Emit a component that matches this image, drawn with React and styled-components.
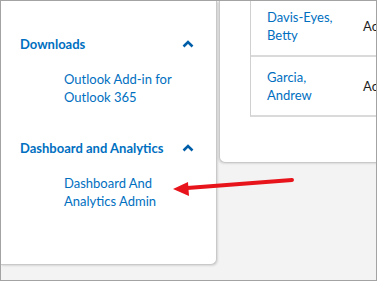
import React from "react";
import styled, { createGlobalStyle } from "styled-components";

const Global = createGlobalStyle`
  html, body { margin: 0; padding: 0; background: #fff; }
  body { font-family: Lato, "Open Sans", sans-serif; }
`;

const Frame = styled.div`
  position: relative;
  width: 377px;
  height: 281px;
  box-sizing: border-box;
  border: 1px solid #a3a3a3;
  background: #f3f3f3;
  display: flex;
  align-items: flex-start;
  overflow: hidden;
`;

const SidePanel = styled.aside`
  flex: 0 0 auto;
  box-sizing: border-box;
  width: 216px;
  height: 264px;
  background: #fff;
  border-right: 1px solid #c9c9c9;
  border-bottom: 1px solid #c9c9c9;
  border-bottom-right-radius: 6px;
  box-shadow: 1px 1px 2px rgba(0, 0, 0, 0.12);
  padding: 33px 0 0 19px;
  display: flex;
  flex-direction: column;
  gap: 32px;
`;

const Section = styled.section`
  display: flex;
  flex-direction: column;
  gap: 16px;
`;

const SectionHeader = styled.div`
  display: flex;
  align-items: center;
  justify-content: space-between;
  width: 175px;
  height: 20px;
  color: #006fbf;
  font-size: 13px;
  font-weight: 700;
`;

const Chevron = styled.svg`
  width: 12px;
  height: 8px;
  margin-right: 1px;
`;

const ItemLink = styled.a`
  display: block;
  margin-left: 44px;
  width: 118px;
  color: #006fbf;
  font-size: 13px;
  line-height: 18px;
  text-decoration: none;
`;

const Card = styled.main`
  flex: 0 0 auto;
  box-sizing: border-box;
  width: 220px;
  height: 162px;
  margin-left: 2px;
  background: #fff;
  border-left: 1px solid #c9c9c9;
  border-bottom: 1px solid #c9c9c9;
  border-bottom-left-radius: 6px;
  box-shadow: -1px 1px 2px rgba(0, 0, 0, 0.1);
  overflow: hidden;
`;

const Table = styled.div`
  margin: -4px 0 0 30px;
  border-left: 1px solid #d0d0d0;
  border-bottom: 2px solid #dadada;
  display: flex;
  flex-direction: column;
`;

const Row = styled.div`
  display: grid;
  grid-template-columns: 96px 1fr;
  padding: 11px 0 11px 16px;
  border-top: ${(p) => (p.$first ? "none" : "2px solid #dadada")};
  font-size: 13px;
  line-height: 18px;
`;

const NameCell = styled.a`
  color: #006fbf;
  text-decoration: none;
  width: 80px;
  align-self: center;
`;

const RoleCell = styled.span`
  color: #1f1f1f;
  align-self: center;
  white-space: nowrap;
`;

const ArrowOverlay = styled.svg`
  position: absolute;
  left: -1px;
  top: -1px;
  width: 377px;
  height: 281px;
  pointer-events: none;
`;

const ChevronUp = () => (
  <Chevron viewBox="0 0 12 8">
    <polyline
      points="1.5,6.5 6,2 10.5,6.5"
      fill="none"
      stroke="#005ea8"
      strokeWidth="2.6"
      strokeLinecap="butt"
    />
  </Chevron>
);

export default function App() {
  return (
    <>
      <Global />
      <Frame>
        <SidePanel>
          <Section>
            <SectionHeader>
              <span>Downloads</span>
              <ChevronUp />
            </SectionHeader>
            <ItemLink href="#">Outlook Add-in for Outlook 365</ItemLink>
          </Section>
          <Section>
            <SectionHeader>
              <span>Dashboard and Analytics</span>
              <ChevronUp />
            </SectionHeader>
            <ItemLink href="#">Dashboard And Analytics Admin</ItemLink>
          </Section>
        </SidePanel>
        <Card>
          <Table>
            <Row $first>
              <NameCell href="#">Davis-Eyes, Betty</NameCell>
              <RoleCell>Active</RoleCell>
            </Row>
            <Row>
              <NameCell href="#">Garcia, Andrew</NameCell>
              <RoleCell>Active</RoleCell>
            </Row>
          </Table>
        </Card>
        <ArrowOverlay viewBox="0 0 377 281">
          <line x1="292" y1="180" x2="184" y2="188.3" stroke="#e8141b" strokeWidth="4" strokeLinecap="round" />
          <polygon points="173,189 188,182 189,196" fill="#e8141b" />
        </ArrowOverlay>
      </Frame>
    </>
  );
}
